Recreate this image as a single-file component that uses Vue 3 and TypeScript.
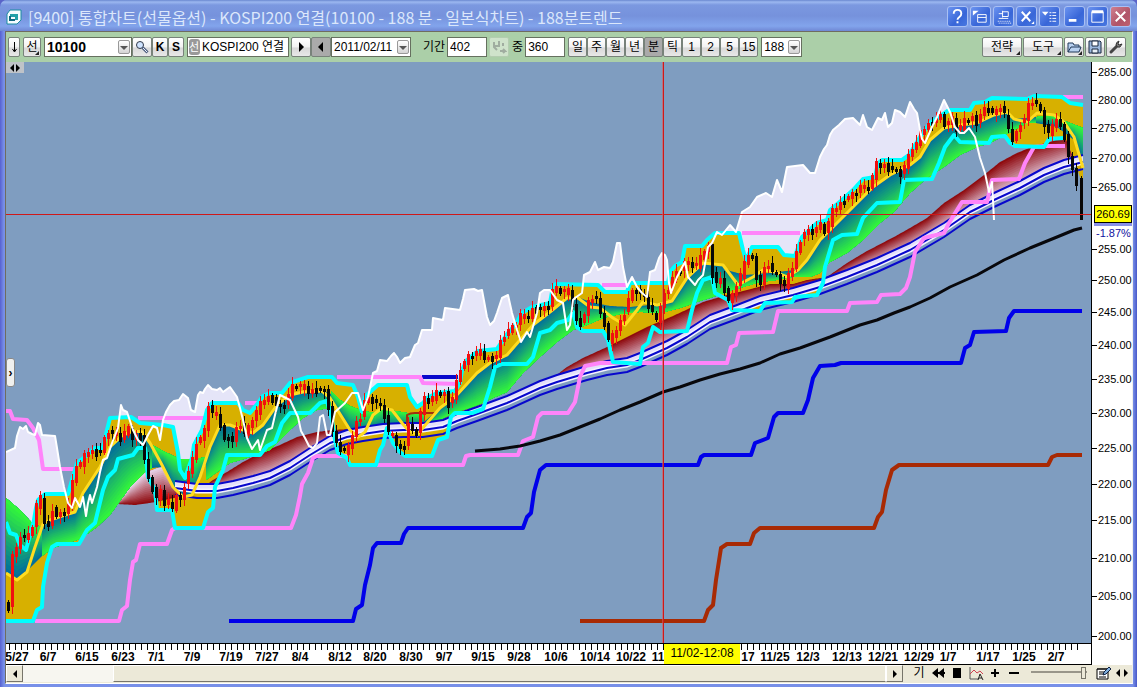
<script setup lang="ts">
import { ref } from 'vue'

type Pt = [number, number]

function parse(source: string): Pt[] {
  return source.trim().split(/\s+/).map((pair) => pair.split(',').map(Number) as Pt)
}

function at(line: Pt[], x: number): number {
  if (x <= line[0][0]) return line[0][1]
  for (let i = 1; i < line.length; i++) {
    const [x1, y1] = line[i]
    const [x0, y0] = line[i - 1]
    if (x <= x1) return x1 === x0 ? y1 : y0 + ((y1 - y0) * (x - x0)) / (x1 - x0)
  }
  return line[line.length - 1][1]
}

function area(top: Pt[], bottom: Pt[]): string {
  return [...top, ...bottom.slice().reverse()].map(([x, y]) => `${x},${y.toFixed(1)}`).join(' ')
}

const upper = '6,522 10,533 16,535 20,545 26,550 34,520 36,508 38,500 45,494 68,494 72,480 77,463 86,456 95,448 103,448 107,430 110,418 131,417 140,423 163,425 173,427 178,453 180,470 185,478 192,458 194,445 202,430 207,410 212,403 238,403 243,410 250,413 258,403 263,396 270,393 282,393 290,383 308,377 332,377 337,383 353,385 358,397 362,412 365,397 370,392 378,385 407,385 410,397 417,407 423,403 427,398 437,393 455,391 460,383 462,370 467,360 478,351 497,349 508,333 515,325 522,313 532,307 550,303 553,286 556,284 598,285 605,292 627,292 630,283 668,283 670,272 675,266 682,262 685,246 702,246 707,240 715,233 739,233 743,250 746,260 752,247 778,247 784,255 795,256 802,237 817,223 827,220 830,210 842,200 853,190 863,179 875,177 878,163 882,160 902,160 909,155 920,137 930,123 942,115 949,110 970,110 974,103 985,102 992,98 1027,99 1034,96 1062,97 1070,103 1083,105'
const lower = '6,621 33,621 37,610 42,607 43,587 47,563 52,547 57,544 79,544 87,530 95,523 103,490 108,477 115,470 118,459 133,455 138,448 145,448 148,477 155,490 157,510 172,510 175,528 203,528 208,512 213,508 215,487 223,470 227,455 260,455 267,446 275,442 282,423 290,413 310,413 320,403 327,401 332,420 335,440 338,453 347,458 350,465 376,465 380,450 383,445 387,428 393,443 400,452 405,456 432,456 438,440 447,437 451,417 455,413 472,413 483,409 490,387 495,367 502,364 527,364 533,357 540,333 550,330 557,323 568,320 573,312 577,327 583,331 603,331 608,340 613,362 640,364 643,347 648,343 653,327 660,332 687,331 692,310 697,293 703,280 712,277 715,293 728,300 732,310 760,311 765,303 792,302 795,297 817,295 823,283 825,267 833,240 842,235 857,234 863,218 877,203 900,202 904,180 932,179 939,163 945,147 954,135 960,142 989,143 992,137 1005,136 1010,143 1015,146 1044,147 1049,139 1064,138'
const fast = '6,573 17,580 27,572 35,547 43,524 50,520 65,515 75,512 83,493 100,467 110,447 123,435 133,431 142,432 150,443 162,465 173,487 183,497 192,495 200,477 210,447 220,425 230,425 243,430 253,433 263,425 277,405 290,395 303,392 322,391 330,398 350,430 358,437 365,432 373,415 382,408 392,410 402,423 408,430 417,435 427,423 440,408 455,397 477,373 490,363 507,355 520,340 533,325 550,312 567,298 578,298 590,307 600,308 613,318 625,325 637,310 643,302 657,305 672,301 687,278 703,263 723,265 738,285 753,277 763,270 775,272 787,277 798,270 807,260 820,240 837,223 853,207 873,187 890,175 910,165 920,157 930,140 944,128 960,125 977,123 994,115 1007,112 1014,119 1027,122 1037,113 1054,115 1064,122 1074,137 1083,168'
const lagging = '6,452 15,448 17,436 20,427 23,429 26,426 28,432 32,434 35,435 38,423 40,425 42,435 55,436 57,448 60,467 64,487 68,503 72,508 75,498 80,507 83,497 86,516 88,503 90,495 92,503 97,487 100,472 103,460 107,458 112,443 118,428 121,405 123,410 127,412 133,430 138,440 143,445 148,435 153,426 157,428 160,440 163,420 166,412 170,405 174,401 179,400 183,394 188,398 191,410 195,412 198,395 200,392 203,393 205,389 208,385 212,389 217,390 220,388 223,392 230,387 237,397 240,408 243,420 247,438 252,449 258,440 260,450 267,430 272,428 275,415 280,395 290,400 298,417 301,431 305,438 309,446 313,448 317,443 320,417 323,415 327,435 330,435 335,412 345,403 352,393 358,393 363,410 368,397 373,373 377,371 380,360 387,361 391,356 394,353 397,357 400,363 405,358 410,357 415,345 418,343 422,330 432,330 433,318 443,320 445,308 460,310 463,299 465,290 474,289 478,291 482,290 487,317 490,325 494,321 497,313 502,298 508,295 512,313 517,330 521,342 527,332 530,337 537,313 540,293 544,290 550,290 557,300 563,303 567,330 570,325 573,300 575,298 582,293 584,275 590,272 593,266 595,262 598,270 604,267 610,268 613,262 617,243 620,243 623,267 627,287 632,277 637,287 642,293 647,297 650,272 655,270 659,258 662,253 665,255 667,260 669,283 671,293 677,277 685,262 688,277 695,285 698,280 703,275 708,247 712,243 717,232 722,235 730,225 736,232 742,212 750,207 757,197 766,193 772,197 777,180 782,192 787,167 795,166 803,165 810,173 815,173 820,157 824,149 827,145 830,135 833,130 839,125 845,119 853,118 860,125 863,115 867,127 872,130 878,118 882,120 885,113 888,127 892,123 895,110 900,112 905,117 910,102 914,109 917,113 920,130 922,139 925,143 932,127 937,117 944,100 950,112 955,127 960,133 964,133 969,128 975,137 980,158 985,173 989,192 992,182 993,200 994,220'
const baseline = '175,488 197,491 217,491 233,488 253,483 270,478 290,468 310,455 330,443 347,437 363,434 383,431 403,430 423,430 443,427 457,421 477,414 507,403 540,388 557,382 587,373 607,368 627,365 640,360 667,348 687,337 710,322 737,312 760,303 793,295 820,287 847,277 877,265 910,250 944,230 970,212 994,200 1020,188 1044,175 1064,167 1083,162'

const upperPts = parse(upper)
const lowerPts = parse(lower)
const laggingPts = parse(lagging)
const basePts = parse(baseline)

const lagTop: Pt[] = []
const lagBottom: Pt[] = []
for (let x = 6; x <= 956; x++) {
  const floor = at(upperPts, x)
  lagTop.push([x, Math.min(at(laggingPts, x), floor)])
  lagBottom.push([x, floor])
}
const lagArea = area(lagTop, lagBottom)
const channelArea = area(upperPts, [...lowerPts, [1070, 150], [1083, 185]])

interface Ribbon { from: string; to: string; c0: number[]; c1: number[] }
const BLUE = [0, 104, 160]
const GREEN = [52, 250, 56]
const MAROON = [140, 4, 8]
const PALE = [232, 214, 236]

const ribbons: Ribbon[] = [
  { c0: MAROON, c1: PALE, from: '117,504 135,505 150,503 165,500 178,497', to: '117,503 130,487 145,473 163,466 178,480' },
  { c0: MAROON, c1: PALE, from: '178,496 200,490 213,480 227,472 243,462 260,453 280,445 297,437 317,432 333,430 350,429 370,428', to: '178,490 200,491 217,491 233,488 253,483 270,478 290,468 310,455 330,443 347,437 370,433' },
  { c0: MAROON, c1: PALE, from: '545,384 567,367 583,358 607,347 627,337 647,327 673,316 703,302 727,295 743,291 770,284 793,284 807,280 827,277 847,263 867,251 894,237 910,228 927,218 944,203 964,190 984,175 1000,162 1017,153 1034,146 1050,142 1065,137 1072,155', to: '545,387 557,382 587,373 607,368 627,365 640,360 667,348 687,337 710,322 737,312 760,303 793,295 820,287 847,277 877,265 910,250 944,230 970,212 994,200 1020,188 1044,175 1064,167 1072,165' },
  { c0: BLUE, c1: GREEN, from: '6,573 17,580 27,571 42,556', to: '6,498 20,510 33,524 42,527' },
  { c0: BLUE, c1: GREEN, from: '42,526 50,520 65,515 75,512 83,493 100,467 110,447 123,435 133,431 142,432 152,445', to: '42,556 53,548 80,539 97,527 110,515 130,487 147,470 152,468' },
  { c0: BLUE, c1: GREEN, from: '152,468 163,467 167,475 173,487 183,497 195,492 206,463', to: '152,445 163,451 180,459 195,459 206,457' },
  { c0: BLUE, c1: GREEN, from: '206,458 210,447 220,425 230,425 243,430 253,433 263,425 277,405 290,395 303,392 322,390 331,394', to: '206,480 230,463 247,458 270,450 290,430 303,418 317,410 331,408' },
  { c0: BLUE, c1: GREEN, from: '331,402 340,415 350,430 358,434 365,432 376,428', to: '331,391 340,400 350,406 363,411 376,413' },
  { c0: BLUE, c1: GREEN, from: '376,428 395,427 402,426 410,427 424,425', to: '376,412 382,408 395,411 407,413 424,415' },
  { c0: BLUE, c1: GREEN, from: '424,422 440,408 455,397 477,373 490,363 507,355 520,340 533,325 550,312 567,298 578,297 590,302 610,306 630,307 650,305 672,301 687,278 703,263 720,264 730,271 745,275 770,273 795,270 807,260 820,240 837,223 853,207 873,187 890,175 910,165 920,157 930,140 944,128 960,125 977,123 994,115 1007,112 1014,119 1036,117', to: '424,427 440,420 453,413 473,407 493,398 507,392 523,373 540,357 557,342 573,330 587,325 603,318 620,314 640,312 660,313 680,308 697,302 713,297 727,292 743,287 760,282 777,280 793,277 810,277 820,273 830,262 847,253 863,240 880,223 894,212 910,193 927,178 944,167 960,155 977,147 990,143 1005,135 1014,130 1027,123 1036,123' },
  { c0: BLUE, c1: GREEN, from: '1036,123 1057,127 1074,140 1083,162', to: '1036,117 1050,115 1057,118 1070,123 1083,128' },
]

const SHADES = 16
const shadedBands = ribbons.flatMap((ribbon) => {
  const from = parse(ribbon.from)
  const to = parse(ribbon.to)
  const x0 = from[0][0]
  const x1 = from[from.length - 1][0]
  return Array.from({ length: SHADES }, (_, shade) => {
    const t = shade / SHADES
    const near: Pt[] = []
    const far: Pt[] = []
    for (let x = x0; x <= x1; x++) {
      const a = at(from, x)
      const b = at(to, x)
      near.push([x, a + (b - a) * t])
      far.push([x, b])
    }
    const mix = ribbon.c0.map((c, i) => Math.round(c + (ribbon.c1[i] - c) * ((shade + 0.5) / SHADES)))
    return { points: area(near, far), fill: `rgb(${mix.join(',')})` }
  })
})

const shift = (line: Pt[], dy: number) => line.map(([x, y]) => `${x},${y + dy}`).join(' ')
const channelTop = shift(basePts, -7)
const channelBottom = shift(basePts, 7)
const channelFill = area(basePts.map(([x, y]) => [x, y - 7] as Pt), basePts)

const pinkLines = [
  '6,411 10,411 13,419 27,420 33,428 39,440 43,469 75,469',
  '138,418 204,418',
  '245,403 258,403',
  '337,377 420,377 423,383 458,384',
  '602,285 628,285',
  '742,233 800,233',
  '1063,97 1083,97',
  '35,621 119,621 122,610 127,606 130,580 133,562 136,560 140,544 167,544 172,530 175,528 291,528 296,515 300,496 302,484 308,473 313,458 317,456 347,456',
  '377,465 463,465 466,456 470,455 518,455 523,441 533,437 538,417 542,413 568,413 575,402 580,377 585,366 600,363 727,363 731,347 736,345 739,333 773,332 778,311 847,311 850,303 877,302 881,295 900,294 906,288 910,277 915,252 924,238 944,233 949,223 962,202 987,202 992,180 1019,179 1025,163 1034,147 1044,146 1065,146',
]

const price = parse('6,605 8,612 10,600 12,560 15,542 17,550 20,535 23,537 30,537 33,526 35,508 39,502 43,497 46,533 50,525 53,508 58,516 63,515 68,508 72,490 76,465 82,463 88,452 95,452 103,450 107,430 112,432 118,436 123,440 127,425 132,438 138,436 143,436 145,458 148,478 153,488 155,502 160,490 165,503 170,500 174,515 177,495 182,502 186,478 192,465 197,442 202,437 206,430 209,405 213,412 218,417 222,428 226,445 229,437 232,442 236,433 240,422 247,437 250,425 258,410 265,400 272,397 280,408 284,407 290,393 295,385 300,385 305,388 310,393 315,390 322,388 327,395 331,418 335,442 340,448 346,452 350,448 355,425 360,420 365,400 370,400 375,400 380,405 385,415 388,430 395,440 400,450 405,445 408,420 412,432 417,432 420,415 425,400 430,400 437,394 445,394 450,405 455,392 458,378 462,365 467,360 475,353 480,352 485,358 490,360 497,355 502,340 508,330 515,328 521,315 527,320 533,310 540,308 548,310 553,290 560,290 567,291 571,293 574,310 578,325 583,320 588,305 593,297 597,297 602,320 606,325 610,345 615,332 620,325 625,312 630,295 637,290 643,295 648,305 652,305 655,325 658,322 662,300 668,290 672,278 680,272 685,262 690,265 697,265 702,258 707,245 711,250 714,285 718,280 723,282 728,300 732,300 737,285 743,270 749,255 755,262 759,290 763,275 768,262 774,273 781,280 785,285 790,275 795,262 799,245 803,233 812,232 820,225 826,232 832,213 840,205 848,197 855,195 862,185 867,192 872,180 876,165 885,166 893,168 900,175 907,163 913,148 918,142 923,130 930,125 937,118 942,117 946,126 952,118 958,130 965,122 972,118 977,122 982,112 990,108 996,115 1000,105 1005,113 1010,135 1015,142 1019,125 1025,118 1031,100 1037,103 1042,115 1047,130 1052,135 1055,115 1060,125 1065,135 1069,155 1074,175 1078,185')

const candles: { x: number; top: number; height: number; high: number; low: number; rising: boolean }[] = []
for (let x = 8, n = 0; x < 1078; x += 4, n++) {
  const noise = ((n * 37) % 11) - 5
  const open = at(price, x - 3) + noise * 0.5
  const close = at(price, x + 1) - noise * 0.7
  const top = Math.round(Math.min(open, close)) - 1
  const height = Math.max(3, Math.round(Math.abs(open - close)) + 2)
  candles.push({ x, top, height, high: top - 2 - ((n * 7) % 6), low: top + height + 2 + ((n * 5) % 6), rising: close < open })
}
candles.push({ x: 1081, top: 178, height: 42, high: 176, low: 220, rising: false })

const CHART_TOP = 62
const CHART_HEIGHT = 581
const priceTicks: [string, number][] = [
  ['285.00', 72], ['280.00', 100], ['275.00', 128], ['270.00', 158], ['265.00', 187], ['255.00', 249],
  ['250.00', 280], ['245.00', 312], ['240.00', 345], ['235.00', 379], ['230.00', 413], ['225.00', 448],
  ['220.00', 484], ['215.00', 520], ['210.00', 558], ['205.00', 596], ['200.00', 636],
]
const dateTicks: [string, number][] = [
  ['5/27', 17], ['6/7', 48], ['6/15', 87], ['6/23', 123], ['7/1', 156], ['7/9', 192], ['7/19', 231], ['7/27', 267],
  ['8/4', 300], ['8/12', 340], ['8/20', 375], ['8/30', 411], ['9/7', 444], ['9/15', 483], ['9/28', 519], ['10/6', 556],
  ['10/14', 595], ['10/22', 631], ['11', 658], ['17', 748], ['11/25', 775], ['12/3', 808], ['12/13', 847],
  ['12/21', 883], ['12/29', 919], ['1/7', 948], ['1/17', 988], ['1/25', 1024], ['2/7', 1056],
]
const topOf = (y: number) => ({ top: `${((y - CHART_TOP) / CHART_HEIGHT) * 100}%` })
const leftOf = (x: number) => ({ left: `${((x - 6) / 1085) * 100}%` })
const minorTicks = Array.from({ length: 179 }, (_, i) => 9 + i * 6)

const periods = ['일', '주', '월', '년', '분', '틱', '1', '2', '5', '15']
const period = ref('분')
const symbolName = ref('KOSPI200 연결')
const barCount = ref('402')
const barTotal = ref('360')
const zoomLevel = ref(98)
</script>

<template>
  <div class="window">
    <header class="titlebar">
      <svg class="logo" viewBox="0 0 16 16" aria-hidden="true">
        <path d="M4 1h11v10l-4 4H1V5z" fill="#f4fcff" stroke="#1c8ca0" />
        <path d="M4 5h8v6H9V8H4z" fill="#20a0a8" /><path d="M4 7v4h5" fill="none" stroke="#106880" stroke-width="2" />
      </svg>
      <h1>[9400] 통합차트(선물옵션) - KOSPI200 연결(10100 - 188 분 - 일본식차트) - 188분트렌드</h1>
      <div class="window-buttons">
        <button type="button" aria-label="도움말"><svg viewBox="0 0 20 20"><path d="M6 7q0-4 4-4t4 4q0 2-2 3.500t-2 3M10 15v2" stroke-width="2" /></svg></button>
        <button type="button" aria-label="창 분리"><svg viewBox="0 0 20 20"><path d="M7 8h9v8H7zM7 11h9" /><path d="M2 4h6l-6 5z" fill="#fff" stroke="none" /></svg></button>
        <button type="button" aria-label="고정"><svg viewBox="0 0 20 20"><path d="M5 7h4M9 4v7M9 5h6v5H9M5 12h10" /><path d="M4 15h13M5 17h13" stroke-dasharray="1 1" /></svg></button>
        <button type="button" aria-label="도구 닫기"><svg viewBox="0 0 20 20"><path d="M5 5l9 10M14 5L5 15" stroke-width="2" /><path d="M18 15v3h-3z" fill="#fff" stroke="none" /></svg></button>
        <button type="button" aria-label="메뉴"><svg viewBox="0 0 20 20"><path d="M2 5h7l-3.500 4z" fill="#fff" stroke="none" /><path d="M10 6h7M10 9h7M10 12h7M10 15h7" stroke-dasharray="2 1 4 0" /></svg></button>
        <button type="button" class="gap" aria-label="최소화"><svg viewBox="0 0 20 20"><path d="M4 14h8" stroke-width="3" /></svg></button>
        <button type="button" aria-label="최대화"><svg viewBox="0 0 20 20"><path d="M4 5h12v11H4z" /><path d="M4 5h12" stroke-width="3" /></svg></button>
        <button type="button" class="close" aria-label="닫기"><svg viewBox="0 0 20 20"><path d="M5 5l10 10M15 5L5 15" stroke-width="2" /></svg></button>
      </div>
    </header>

    <div class="body">
      <div class="toolbar">
        <button type="button" class="btn slim" aria-label="아래로"><svg viewBox="0 0 9 14"><path d="M4.500 2v9M2.500 9l2 3 2-3" fill="none" stroke="#000" /></svg></button>
        <button type="button" class="btn kind corner">선</button>
        <span class="combo code">
          <select aria-label="종목코드"><option>10100</option></select><i></i>
        </span>
        <div class="joined">
          <button type="button" class="btn find" aria-label="종목 찾기"><svg viewBox="0 0 16 16"><circle cx="6" cy="6" r="3.500" fill="#d0e4ff" stroke="#303848" /><path d="M8.500 8.500l5 5" stroke="#506080" stroke-width="3" /><path d="M9 9l4 4" stroke="#e8f0ff" /></svg></button>
          <button type="button" class="btn letter">K</button>
          <button type="button" class="btn letter">S</button>
        </div>
        <div class="named"><span>선</span><input v-model="symbolName" aria-label="종목명" /></div>
        <div class="joined">
          <button type="button" class="btn step" aria-label="다음"><svg viewBox="0 0 10 10"><path d="M3 0v10l5-5z" /></svg></button>
          <button type="button" class="btn step pressed" aria-label="이전"><svg viewBox="0 0 10 10"><path d="M7 0v10L2 5z" /></svg></button>
          <span class="combo date"><select aria-label="날짜"><option>2011/02/11</option></select><i></i></span>
        </div>
        <label class="field count">기간<input v-model="barCount" /></label>
        <button type="button" class="btn ghost" disabled aria-label="이동"><svg viewBox="0 0 16 16"><path d="M3 3v5l3 3M8 2v6M12 4v3M2 7h5M9 12h5l-2-2m2 2-2 2" fill="none" stroke="#a0ada0" stroke-width="2" /></svg></button>
        <label class="field total">중<input v-model="barTotal" /></label>
        <div class="joined periods">
          <button v-for="p in periods" :key="p" type="button" class="btn" :class="{ pressed: p === period }" @click="period = p">{{ p }}</button>
        </div>
        <span class="combo minute"><select aria-label="분 단위"><option>188</option></select><i></i></span>
        <div class="tools">
          <button type="button" class="btn wide corner">전략</button>
          <button type="button" class="btn wide corner">도구</button>
          <button type="button" class="btn icon corner" aria-label="열기"><svg viewBox="0 0 16 16"><path d="M2 13V4h5l1 2h5v2M2 13l3-5h10l-2 5z" fill="#b8d0f0" stroke="#203858" /></svg></button>
          <button type="button" class="btn icon" aria-label="저장"><svg viewBox="0 0 16 16"><path d="M2 2h11l1 1v11H2z" fill="#9cb8dc" stroke="#182840" /><path d="M5 2h6v5H5z" fill="#fff" stroke="#182840" /><path d="M5 10h6v4H5z" fill="#e8f0f8" stroke="#182840" /></svg></button>
          <button type="button" class="btn icon" aria-label="설정"><svg viewBox="0 0 16 16"><path d="M3 13l6-6" stroke="#444" stroke-width="3" stroke-linecap="round" /><path d="M11 2q-3 1-3 4 1 3 4 2l2-3-3 1-1-1z" fill="#777" stroke="#333" /></svg></button>
        </div>
      </div>

      <main class="workspace">
        <div class="plot-column">
          <div class="plot">
            <svg viewBox="6 62 1085 581" preserveAspectRatio="none" role="img" aria-label="KOSPI200 연결 188분 차트">
              <polygon :points="lagArea" fill="#e5e5f8" />
              <polygon :points="channelArea" fill="#d7b000" />
              <polygon v-for="(band, i) in shadedBands" :key="i" :points="band.points" :fill="band.fill" />
              <polygon :points="channelFill" fill="#e4e0fa" />
              <g class="line" stroke="#0808cc" stroke-width="2">
                <polyline :points="baseline" stroke="#f4f2ff" stroke-width="5" />
                <polyline :points="channelTop" /><polyline :points="baseline" /><polyline :points="channelBottom" />
                <path d="M422 377h36" stroke-width="4" />
              </g>
              <g class="line" stroke="#ff84fa" stroke-width="4"><polyline v-for="line in pinkLines" :key="line" :points="line" /></g>
              <polyline class="line" :points="upper" stroke="#00ffff" stroke-width="4" />
              <polyline class="line" :points="lower" stroke="#00ffff" stroke-width="4" />
              <path class="line" d="M407 428V415q3-2 8-2h20M420 413h13" stroke="#a03010" stroke-width="2" />
              <polyline class="line" :points="fast" stroke="#ffdc20" stroke-width="3" />
              <g shape-rendering="crispEdges">
                <g v-for="c in candles" :key="c.x" :fill="c.rising ? '#f01010' : '#080808'">
                  <rect :x="c.x" :y="c.high" width="1" :height="c.low - c.high" /><rect :x="c.x - 1" :y="c.top" width="3" :height="c.height" />
                </g>
              </g>
              <polyline class="line" :points="lagging" stroke="#fff" stroke-width="2" />
              <polyline class="line" points="475,451 500,449 520,446 540,441 560,435 580,427 600,419 620,410 640,402 663,392 680,387 700,380 720,374 740,369 760,363 780,354 800,348 830,337 860,325 877,320 894,313 910,307 930,298 950,287 977,275 1004,260 1030,248 1057,237 1074,230 1082,228" stroke="#08080c" stroke-width="3" />
              <polyline class="line" points="229,621 353,621 356,609 362,605 365,585 370,565 373,548 377,543 401,543 404,534 408,528 523,528 527,517 531,513 534,492 540,470 546,465 698,465 701,457 704,455 751,455 755,443 768,438 774,417 778,413 803,413 808,400 813,378 820,366 835,365 841,363 961,363 965,348 970,345 974,332 1006,331 1009,318 1014,311 1082,311" stroke="#0000ea" stroke-width="4" />
              <polyline class="line" points="580,621 704,621 708,610 713,605 716,580 721,548 727,544 750,544 754,533 760,528 874,528 878,517 882,512 886,490 892,470 899,465 1048,465 1052,457 1057,455 1082,455" stroke="#a82a04" stroke-width="4" />
            </svg>
            <div class="cross-x" :style="topOf(214)"></div>
            <div class="cross-y" :style="leftOf(663)"></div>
            <button type="button" class="resize" aria-label="폭 조절"><svg viewBox="0 0 18 10"><path d="M8 1v8L4 5zM10 1v8l4-4z" /></svg></button>
            <button type="button" class="drawer" aria-label="패널 열기">›</button>
          </div>
          <div class="date-axis">
            <i v-for="x in minorTicks" :key="x" :style="leftOf(x)"></i>
            <span v-for="[label, x] in dateTicks" :key="label" :style="leftOf(x)">{{ label }}</span>
            <output :style="leftOf(664)">11/02-12:08</output>
          </div>
        </div>
        <div class="price-axis">
          <div class="scale">
            <span v-for="[label, y] in priceTicks" :key="label" :style="topOf(y)">{{ label }}</span>
            <output :style="topOf(214)">260.69</output>
            <b :style="topOf(233)">-1.87%</b>
          </div>
        </div>
      </main>

      <footer class="bottom">
        <div class="scroller">
          <button type="button" aria-label="왼쪽"><svg viewBox="0 0 8 8"><path d="M6 0v8L2 4z" /></svg></button>
          <div class="track"><div class="thumb"></div></div>
          <button type="button" aria-label="오른쪽"><svg viewBox="0 0 8 8"><path d="M2 0v8l4-4z" /></svg></button>
        </div>
        <div class="controls">
          <button type="button" class="ki">기</button>
          <button type="button" aria-label="처음으로"><svg viewBox="0 0 16 16"><path d="M8 3v10L2 8zM14 3v10L8 8z" /><path d="M7 8h8" stroke="#000" stroke-width="2" /></svg></button>
          <button type="button" aria-label="정지"><svg viewBox="0 0 16 16"><path d="M4 3h8v10H4z" /></svg></button>
          <button type="button" aria-label="자동 배율"><svg viewBox="0 0 16 16"><path d="M2 2v12h8" fill="none" stroke="#555" /><path d="M2 9l4-4 3 3 3-2 3 3" fill="none" stroke="#d04050" /><path d="M10 15l2-6 3 6M11 13h3" fill="none" stroke="#222" /></svg></button>
          <button type="button" aria-label="확대"><svg viewBox="0 0 16 16"><path d="M7 4h2v8H7zM4 7h8v2H4z" /></svg></button>
          <button type="button" aria-label="축소"><svg viewBox="0 0 16 16"><path d="M3 7h10v2H3z" /></svg></button>
          <input v-model="zoomLevel" type="range" aria-label="배율" />
          <button type="button" aria-label="메모"><svg viewBox="0 0 16 16"><path d="M2 4h11v10H2z" fill="#fff" stroke="#000" /><path d="M2 4h11M4 7h6M4 9h5M4 12h7" stroke="#000" /><path d="M8 10l1-3 5-5 2 2-5 5z" fill="#80b0e0" stroke="#102040" /></svg></button>
          <button type="button" aria-label="좌우 이동"><svg viewBox="0 0 16 16"><path d="M6 4v8L2 8zM10 4v8l4-4z" /></svg></button>
        </div>
      </footer>
    </div>
  </div>
</template>

<style>
body {
  background: #5a64c8;
}
</style>

<style scoped>
* {
  box-sizing: border-box;
}

.window {
  display: flex;
  flex-direction: column;
  height: 100vh;
  padding: 0 4px 3px 5px;
  overflow: hidden;
  color: #000;
  background: linear-gradient(90deg, #5660d0, #7890e8 4px, #7890e8 calc(100% - 4px), #4858c8);
  border-radius: 7px 7px 0 0;
  font: 12px/16px "Liberation Sans", "Noto Sans CJK KR", sans-serif;
}

button,
input,
select {
  margin: 0;
  padding: 0;
  color: #000;
  font: inherit;
}

button svg {
  display: block;
  width: 16px;
  height: 16px;
}

.titlebar {
  display: flex;
  flex: none;
  align-items: center;
  height: 31px;
  margin: 0 -4px 0 -5px;
  padding: 2px 6px 0;
  background: linear-gradient(#6a88d0, #9cb8f0 2px, #7b98e0 5px, #7692dc 16px, #82a4ec 26px, #7088d4);
}

.logo {
  flex: none;
  width: 16px;
  height: 16px;
}

h1 {
  flex: 1;
  min-width: 0;
  margin: 0;
  padding-left: 6px;
  color: #dbe7fb;
  font-family: "Noto Sans CJK KR", sans-serif;
  font-size: 16px;
  font-weight: 400;
  line-height: 26px;
  white-space: nowrap;
}

.window-buttons {
  display: flex;
  gap: 2px;
}

.window-buttons button {
  width: 21px;
  height: 21px;
  border: 1px solid #a9c0f4;
  border-radius: 3px;
  background: linear-gradient(135deg, #6c94f0, #3866d8 60%, #4878e0);
}

.window-buttons .gap {
  margin-left: 2px;
}

.window-buttons .close {
  background: linear-gradient(135deg, #d08090, #b05468 60%, #c06070);
}

.window-buttons svg {
  width: 19px;
  height: 19px;
  fill: none;
  stroke: #fff;
}

.body {
  display: flex;
  flex: 1;
  flex-direction: column;
  min-height: 0;
  border: 1px solid #6f6c60;
  border-right-color: #eee;
  border-bottom-color: #fff;
  background: #fff;
}

.toolbar {
  display: flex;
  flex: none;
  align-items: center;
  height: 30px;
  padding: 0 6px 0 2px;
  background: #abcfa8;
}

.btn {
  position: relative;
  display: flex;
  flex: none;
  align-items: center;
  justify-content: center;
  height: 20px;
  border: 1px solid #78827a;
  border-radius: 2px;
  background: linear-gradient(#fff, #f2f2f2 50%, #d8d8d8 55%, #e8e8e8);
}

.corner::after {
  position: absolute;
  right: 1px;
  bottom: 1px;
  border: 2px solid transparent;
  border-right-color: #222;
  border-bottom-color: #222;
  content: "";
}

.pressed {
  background: #aaa;
}

.slim {
  width: 12px;
}

.slim svg {
  width: 9px;
  height: 14px;
}

.kind {
  width: 18px;
  margin: 0 3px;
}

.combo {
  position: relative;
  display: inline-flex;
  flex: none;
  height: 20px;
}

.combo select {
  width: 100%;
  padding: 0 2px;
  border: 1px solid #66705f;
  border-radius: 0;
  background: #fff;
  appearance: none;
}

.combo i {
  position: absolute;
  top: 3px;
  right: 2px;
  width: 12px;
  height: 14px;
  border: 1px solid #999;
  border-radius: 2px;
  background: linear-gradient(#fff, #d4d4d4);
  pointer-events: none;
}

.combo i::after {
  position: absolute;
  top: 5px;
  left: 1px;
  border: 4px solid transparent;
  border-top-color: #555;
  border-bottom: 0;
  content: "";
}

.code {
  width: 88px;
}

.code select {
  font-size: 14px;
  font-weight: 700;
}

.joined {
  display: flex;
}

.find {
  width: 20px;
}

.letter {
  width: 16px;
  font-weight: 700;
}

.named {
  display: flex;
  flex: none;
  align-items: center;
  width: 102px;
  height: 20px;
  margin: 0 2px 0 3px;
  padding: 0 1px;
  border: 1px solid #66705f;
  background: #fff;
}

.named span {
  width: 11px;
  height: 16px;
  margin-right: 2px;
  border-radius: 3px;
  color: #fff;
  background: #999;
  font-size: 11px;
}

.named input {
  flex: 1;
  min-width: 0;
  border: 0;
  font-size: 12px;
}

.step {
  width: 20px;
}

.step svg {
  width: 10px;
  height: 10px;
}

.date {
  width: 80px;
}

.field {
  display: flex;
  flex: none;
  align-items: center;
  gap: 2px;
}

.field input {
  width: 40px;
  height: 20px;
  padding: 0 2px;
  border: 1px solid #66705f;
}

.count {
  margin: 0 2px 0 12px;
}

.ghost {
  width: 20px;
  background: #cfe3cb;
  border-color: #b4cdb0;
}

.total {
  margin: 0 3px;
}

.periods .btn {
  width: 19px;
}

.minute {
  width: 41px;
  margin-left: 3px;
}

.tools {
  display: flex;
  gap: 1px;
  margin-left: auto;
}

.wide {
  width: 40px;
}

.icon {
  width: 20px;
}

.workspace {
  display: flex;
  flex: 1;
  min-height: 0;
}

.plot-column {
  display: flex;
  flex: 1;
  flex-direction: column;
  min-width: 0;
}

.plot {
  position: relative;
  flex: 1;
  min-height: 0;
  overflow: hidden;
  background: #7f9dc0;
}

.plot > svg {
  display: block;
  width: 100%;
  height: 100%;
}

.line {
  fill: none;
  stroke-linejoin: round;
}

.cross-x,
.cross-y {
  position: absolute;
  background: #d01818;
  pointer-events: none;
}

.cross-x {
  left: 0;
  width: 100%;
  height: 1px;
}

.cross-y {
  top: 0;
  width: 1px;
  height: 100%;
  box-shadow: -1px 0 rgb(216 90 90 / 60%);
}

.resize {
  position: absolute;
  top: 0;
  left: 0;
  width: 18px;
  height: 11px;
  border: 0;
  background: #bfc3c8;
}

.resize svg {
  width: 18px;
  height: 10px;
}

.drawer {
  position: absolute;
  top: 51%;
  left: 0;
  width: 9px;
  height: 29px;
  border: 1px solid #888;
  border-radius: 3px;
  background: #f0f0ee;
  font-weight: 700;
  line-height: 24px;
}

.date-axis {
  position: relative;
  flex: none;
  height: 22px;
  overflow: hidden;
  border-top: 1px solid #000;
  border-bottom: 1px solid #000;
  font-weight: 700;
}

.date-axis i {
  position: absolute;
  top: 0;
  width: 1px;
  height: 6px;
  background: #000;
}

.date-axis span {
  position: absolute;
  top: 5px;
  transform: translateX(-50%);
}

.date-axis output {
  position: absolute;
  top: 0;
  width: 76px;
  height: 20px;
  background: #ff0;
  font-weight: 400;
  line-height: 19px;
  text-align: center;
}

.price-axis {
  flex: none;
  width: 41px;
  padding-bottom: 22px;
  background: linear-gradient(#000, #000) 0 0 / 1px 100% no-repeat #fff;
  font-size: 11px;
}

.scale {
  position: relative;
  height: 100%;
}

.scale span,
.scale output,
.scale b {
  position: absolute;
  transform: translateY(-50%);
}

.scale span {
  left: 1px;
  padding-left: 6px;
}

.scale span::before {
  position: absolute;
  top: 8px;
  left: 0;
  width: 5px;
  height: 1px;
  background: #000;
  content: "";
}

.scale output {
  left: 3px;
  width: 38px;
  height: 18px;
  border: 1px solid #000;
  background: #ff0;
  box-shadow: 0 3px #8890e8;
  text-align: center;
}

.scale b {
  left: 5px;
  color: #1010a0;
  font-weight: 400;
}

.bottom {
  display: flex;
  flex: none;
  height: 18px;
  background: #ece9d8;
}

.scroller {
  display: flex;
  flex: 1;
  height: 17px;
}

.scroller button {
  width: 17px;
  border: 1px solid #fff;
  border-right-color: #77756a;
  border-bottom-color: #77756a;
  background: #ece9d8;
}

.scroller button svg {
  width: 8px;
  height: 8px;
  margin: auto;
}

.track {
  flex: 1;
  padding-left: 10%;
  background: #f7f6f0;
}

.thumb {
  height: 100%;
  border: 1px solid #fff;
  border-bottom-color: #77756a;
  background: #ece9d8;
}

.controls {
  display: flex;
  align-items: center;
  gap: 3px;
  width: 229px;
  padding: 0 2px 2px 8px;
}

.controls button {
  flex: none;
  width: 16px;
  height: 16px;
  border: 0;
  background: none;
}

.controls input {
  flex: 1;
  min-width: 0;
  height: 14px;
  margin: 0 5px 0 6px;
  appearance: none;
  background: linear-gradient(#99968a, #99968a) 0 5px / 100% 2px no-repeat;
}

.controls input::-webkit-slider-thumb {
  width: 5px;
  height: 12px;
  border: 1px solid #77756a;
  background: #ece9d8;
  appearance: none;
}
</style>
